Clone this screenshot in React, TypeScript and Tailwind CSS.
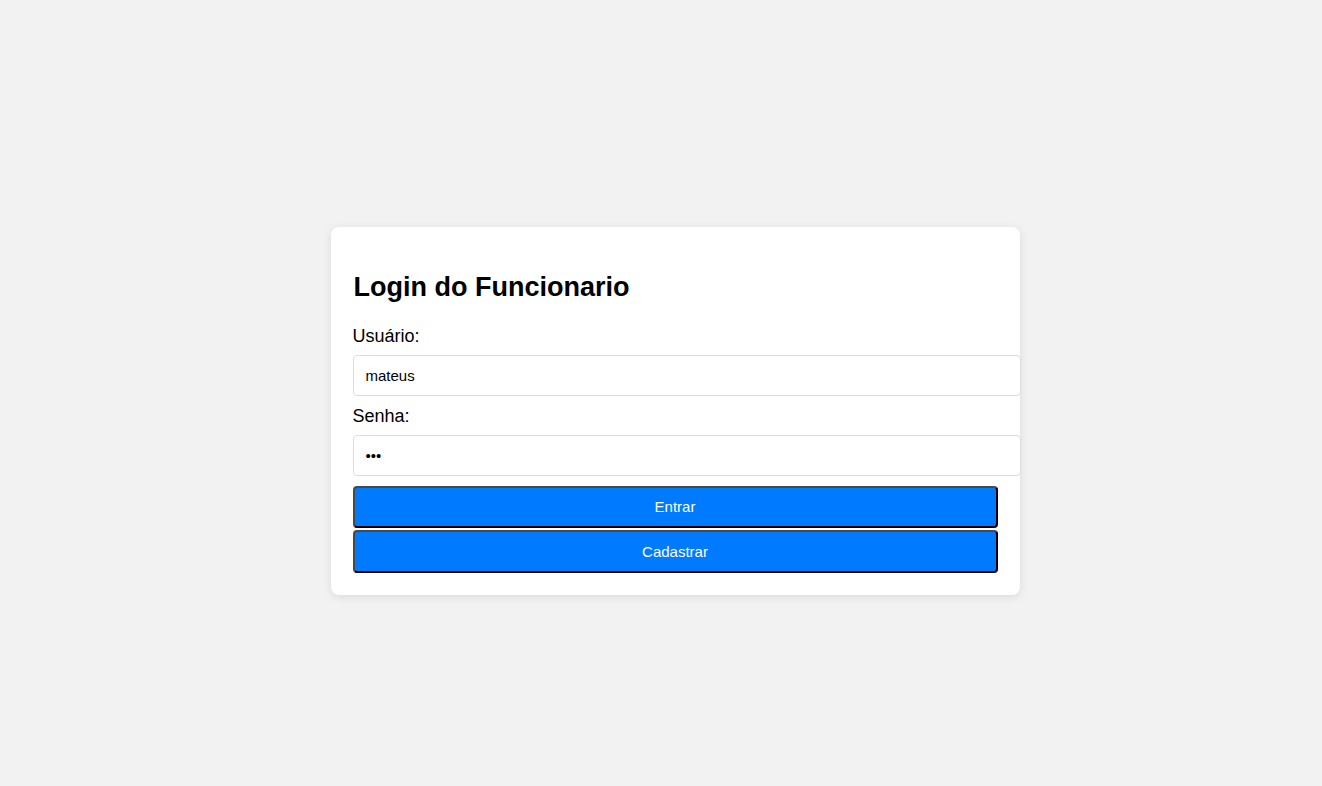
import React from "react";

export default function App() {
  return (
    <div
      className="w-full h-[786px] bg-[#f2f2f2] flex items-center justify-center"
      style={{ fontFamily: '"Liberation Sans", Arial, sans-serif' }}
    >
      <div className="w-[689px] bg-white rounded-[8px] shadow-[0_2px_10px_rgba(0,0,0,0.1)] px-[22px] pt-[22px] pb-[22px] ml-[28px] mt-[36px]">
        <h2 className="text-[27px] leading-[31px] font-bold text-black mt-[23px] mb-[23px] pl-px">
          Login do Funcionario
        </h2>
        <label className="block text-[18px] leading-[21px] text-black mb-[8px]">Usuário:</label>
        <input
          type="text"
          defaultValue="mateus"
          className="block w-[668px] h-[41px] px-[12px] border border-[#dddddd] rounded-[4px] text-[15px] text-black outline-none"
        />
        <label className="block text-[18px] leading-[21px] text-black mt-[10px] mb-[8px]">Senha:</label>
        <input
          type="password"
          defaultValue="123"
          className="block w-[668px] h-[41px] px-[12px] border border-[#dddddd] rounded-[4px] text-[15px] text-black outline-none"
        />
        <button className="block w-full h-[42px] pt-px mt-[10px] bg-[#007bff] text-white text-[15px] rounded-[4px] border-2 border-t-[#4a4a40] border-l-[#4a4a40] border-r-black border-b-black">
          Entrar
        </button>
        <button className="block w-full h-[43px] pt-px mt-[2px] bg-[#007bff] text-white text-[15px] rounded-[4px] border-2 border-t-[#4a4a40] border-l-[#4a4a40] border-r-black border-b-black">
          Cadastrar
        </button>
      </div>
    </div>
  );
}
